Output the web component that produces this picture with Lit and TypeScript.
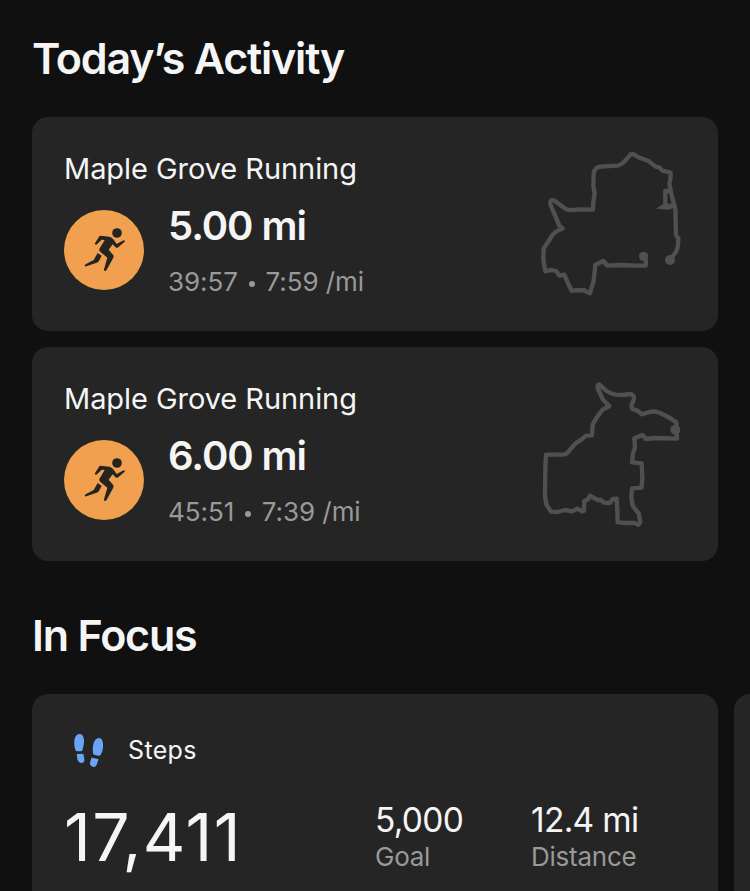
import { LitElement, html, css, svg } from "lit";
import { customElement, property } from "lit/decorators.js";

interface Route {
  path: string;
  fill?: string;
  dots: [number, number, number][];
}

interface Activity {
  name: string;
  distance: string;
  time: string;
  pace: string;
  route: Route;
}

const activities: Activity[] = [
  {
    name: "Maple Grove Running",
    distance: "5.00 mi",
    time: "39:57",
    pace: "7:59 /mi",
    route: {
      path: "M341 349 L348 362 L347 377 L320 377 L275 375 L232 377 L220 363 L196 374 L191 422 L180 460 L172 457 L162 450 L125 452 L115 432 L103 404 L89 407 L78 393 L63 390 L46 394 L40 360 L41 325 L56 303 L67 285 L78 275 L98 265 L88 257 L78 233 L61 193 Q59 176 74 182 L106 206 Q122 213 145 208 L189 209 L190 187 L194 160 L190 140 L191 101 Q194 82 212 80 L262 77 Q271 75 281 67 L302 43 L310 42 L326 52 L357 64 L377 80 L388 82 L397 92 L422 98 L421 120 L418 130 L424 162 L436 207 L438 285 L445 294 L444 318 L438 336 L420 359 M419 153 H406 V198 M426 196 L398 201",
      fill: "M378 206 L400 192 L435 192 L432 204 L415 209 Z",
      dots: [[341, 349, 14], [420, 360, 15]],
    },
  },
  {
    name: "Maple Grove Running",
    distance: "6.00 mi",
    time: "45:51",
    pace: "7:39 /mi",
    route: {
      path: "M436 179 L440 162 L438 156 Q404 132 375 124 L358 126 L336 133 L320 121 L307 117 L304 107 L311 90 Q315 72 297 72 L281 75 L256 74 Q241 71 231 64 L207 43 Q200 45 204 57 L219 89 L238 108 L218 119 L201 141 L188 164 L186 196 L168 197 L154 209 L136 221 L117 243 Q109 255 96 254 L48 254 L46 295 L45 378 L49 404 L63 425 L82 426 L105 420 L126 424 L142 416 L156 424 L162 422 L163 393 L174 388 L180 377 L203 390 L213 390 L222 398 L239 399 L249 387 L260 386 L262 421 L263 457 L291 459 L314 459 L325 464 L331 456 L326 430 L308 408 L304 381 L306 355 L335 353 L337 324 L335 280 L306 277 L309 250 L315 233 L313 205 L337 195 L348 207 L372 204 L441 206 L440 186",
      dots: [[436, 179, 15]],
    },
  },
];

@customElement("activity-card")
export class ActivityCard extends LitElement {
  @property({ attribute: false }) activity!: Activity;

  static styles = css`
    :host {
      display: flex;
      justify-content: space-between;
      box-sizing: border-box;
      height: 214px;
      padding: 23px 23px 0 32px;
      border-radius: 16px;
      background: #252525;
      color: #f5f5f5;
    }
    .info {
      padding-top: 11px;
      white-space: nowrap;
    }
    .name {
      font-size: 29px;
      font-weight: 380;
      line-height: 36px;
      letter-spacing: -0.06px;
    }
    .row {
      display: flex;
      gap: 24px;
      padding-top: 15px;
    }
    .badge {
      display: block;
      width: 80px;
      height: 80px;
      margin-top: 8px;
      flex: none;
    }
    .distance {
      font-size: 40px;
      font-weight: 600;
      line-height: 48px;
      letter-spacing: -1.05px;
    }
    .detail {
      display: flex;
      align-items: center;
      margin-top: 16px;
      font-size: 26px;
      line-height: 32px;
      letter-spacing: -0.05px;
      color: #999;
    }
    .bullet {
      width: 6px;
      height: 6px;
      margin: 4px 10.5px 0 11px;
      border-radius: 50%;
      background: #999;
    }
    .route {
      display: block;
      width: 165px;
      height: 165px;
      flex: none;
    }
  `;

  render() {
    const { name, distance, time, pace, route } = this.activity;
    return html`
      <div class="info">
        <div class="name">${name}</div>
        <div class="row">
          <svg class="badge" viewBox="12 15 240 240">
            <circle cx="132" cy="135" r="120" fill="#f0a04f" />
            <g fill="#262420">
              <circle cx="171" cy="84" r="14.5" />
              <path
                d="M122 92 L148 95 Q156 97 160 103 L170 117 L191 106 Q196 106 194 110 L173 128 Q168 129 165 125 L158 118 L146 134 L160 151 Q162 155 159 160 L141 193 Q138 200 133 197 Q131 195 133 190 L142 158 L124 143 Q116 138 118 132 L134 105 L125 104 L111 118 Q107 121 104 116 L118 94 Q119 92 122 92 Z"
              />
              <path
                d="M113 144 L125 152 L117 168 Q115 171 110 173 L79 184 Q75 185 74 182 Q74 180 77 178 L101 165 Z"
              />
            </g>
          </svg>
          <div>
            <div class="distance">${distance}</div>
            <div class="detail">
              <span>${time}</span><span class="bullet"></span><span>${pace}</span>
            </div>
          </div>
        </div>
      </div>
      <svg class="route" viewBox="0 0 495 495">
        <path
          d=${route.path}
          fill="none"
          stroke="#505050"
          stroke-width="13"
          stroke-linejoin="round"
          stroke-linecap="round"
        />
        ${route.fill ? svg`<path d=${route.fill} fill="#505050" />` : null}
        ${route.dots.map(([x, y, r]) => svg`<circle cx=${x} cy=${y} r=${r} fill="#505050" />`)}
      </svg>
    `;
  }
}

@customElement("focus-card")
export class FocusCard extends LitElement {
  static styles = css`
    :host {
      display: block;
      box-sizing: border-box;
      flex: none;
      width: 686px;
      height: 260px;
      padding: 40px 32px 0;
      border-radius: 16px;
      background: #252525;
      color: #f5f5f5;
      white-space: nowrap;
    }
    .head {
      display: flex;
      align-items: center;
      gap: 16px;
      height: 32px;
      padding-left: 8px;
    }
    .steps {
      display: block;
      width: 40px;
      height: 40px;
    }
    .label {
      font-size: 25px;
      line-height: 32px;
      letter-spacing: 0.35px;
    }
    .stats {
      display: grid;
      grid-template-columns: 311px 156px auto;
      padding-top: 31px;
    }
    .total {
      font-size: 66px;
      line-height: 80px;
      letter-spacing: 1.3px;
    }
    .value {
      font-size: 33.5px;
      line-height: 40px;
      padding-top: 3px;
      letter-spacing: -0.7px;
    }
    .caption {
      padding-top: 1px;
      font-size: 26px;
      line-height: 32px;
      letter-spacing: -0.25px;
      color: #999;
    }
  `;

  render() {
    return html`
      <div class="head">
        <svg class="steps" viewBox="36 30 120 120" fill="#6aa5f5">
          <path d="M56 42 C67 40 73 51 72 66 C71 75 70 83 67 91 Q66 94 63 94 L52 94 Q48 94 46 90 C42 76 39 47 56 42 Z" />
          <path d="M50 102 L68 101 Q70 101 71 105 L73 117 C75 134 55 132 52 118 Z" />
          <path d="M115 54 C128 53 130 68 129 82 C128 93 125 101 121 106 Q119 108 115 107 L102 104 Q99 103 99 98 C97 77 101 57 115 54 Z" />
          <path d="M97 113 L114 117 Q116 118 115 121 L110 134 C105 146 88 141 90 128 L94 115 Q95 112 97 113 Z" />
        </svg>
        <span class="label">Steps</span>
      </div>
      <div class="stats">
        <div class="total">17,411</div>
        <div>
          <div class="value">5,000</div>
          <div class="caption">Goal</div>
        </div>
        <div>
          <div class="value">12.4 mi</div>
          <div class="caption">Distance</div>
        </div>
      </div>
    `;
  }
}

@customElement("app-root")
export class AppRoot extends LitElement {
  static styles = css`
    :host {
      display: block;
      box-sizing: border-box;
      width: 100%;
      height: 891px;
      padding: 32px 32px 0;
      overflow: hidden;
      background: #101010;
      font-family: Inter, "Liberation Sans", sans-serif;
    }
    .title {
      margin: 0;
      font-size: 43px;
      font-weight: 600;
      line-height: 52px;
      letter-spacing: -1.2px;
      color: #f5f5f5;
      white-space: nowrap;
    }
    .list {
      display: flex;
      flex-direction: column;
      gap: 16px;
      padding: 33px 0 48px;
    }
    .carousel {
      display: flex;
      gap: 16px;
      padding-top: 33px;
    }
    .next {
      flex: none;
      width: 686px;
      height: 260px;
      border-radius: 16px;
      background: #252525;
    }
  `;

  render() {
    return html`
      <h1 class="title">Today’s Activity</h1>
      <div class="list">
        ${activities.map((a) => html`<activity-card .activity=${a}></activity-card>`)}
      </div>
      <h1 class="title">In Focus</h1>
      <div class="carousel">
        <focus-card></focus-card>
        <div class="next"></div>
      </div>
    `;
  }
}
